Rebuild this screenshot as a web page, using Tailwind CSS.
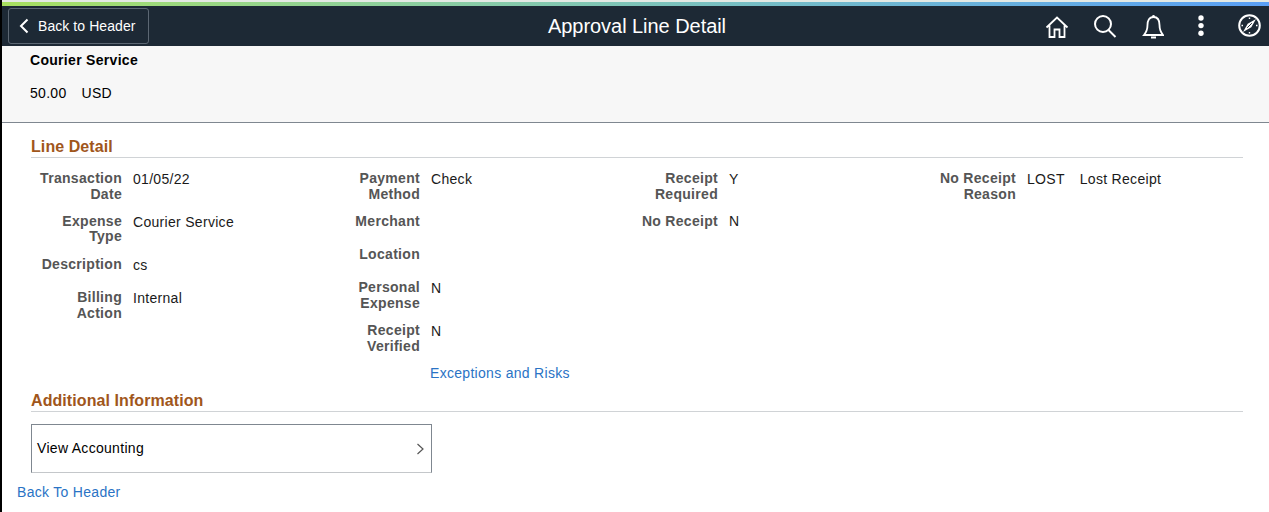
<!DOCTYPE html>
<html><head><meta charset="utf-8"><script src="https://cdn.jsdelivr.net/npm/@tailwindcss/browser@4"></script></head>
<body class="m-0 bg-white">
<div class="w-[1269px] h-[512px] overflow-hidden border-l-2 border-black font-['Liberation_Sans',Arial,sans-serif] text-sm tracking-[0.3px] text-[#1a1a1a] relative">
  <div class="h-[6px] border-t-2 border-[#e4e9e4] bg-linear-to-r from-[#a8e05f] to-[#5a9ff5]"></div>
  <header class="h-[40px] bg-[#1d2935] flex items-center relative tracking-normal">
    <button class="ml-[6px] w-[141px] h-[36px] border border-[#5c6773] rounded-[3px] flex items-center text-white text-sm pl-[10px] tracking-[0.07px]">
      <svg width="10" height="16" viewBox="0 0 10 16" fill="none" stroke="white" stroke-width="2" class="mr-[9px]"><path d="M8.5 1.5 L2 8 L8.5 14.5"/></svg>
      <span>Back to Header</span>
    </button>
    <h1 class="absolute left-[546px] top-[8px] text-white text-[20px] leading-[24px] font-normal tracking-[-0.05px]">Approval Line Detail</h1>
    <div class="ml-auto flex items-center">
      <svg class="absolute left-[1043px] top-[9px]" width="24" height="24" viewBox="0 0 24 24" fill="none" stroke="white" stroke-width="1.8"><path d="M1.5 12.5 L12 2.5 L22.5 12.5 M4.5 10.5 V22 H9.5 V14.5 H14.5 V22 H19.5 V10.5"/></svg>
      <svg class="absolute left-[1091px] top-[8px]" width="24" height="26" viewBox="0 0 24 26" fill="none" stroke="white" stroke-width="2"><circle cx="10" cy="10" r="8"/><path d="M15.5 16 L22.5 23"/></svg>
      <svg class="absolute left-[1140px] top-[8px]" width="22" height="26" viewBox="0 0 22 26" fill="none" stroke="white" stroke-width="1.8"><path d="M11.5 3 C7 3 5.5 7 5.5 11 C5.5 16 4.5 18 2 21 H21 C18.5 18 17.5 16 17.5 11 C17.5 7 16 3 11.5 3 Z"/><circle cx="11.5" cy="2.5" r="1.4" fill="white" stroke="none"/><path d="M9 23.5 H14" stroke-width="2"/></svg>
      <svg class="absolute left-[1194px] top-[9px]" width="10" height="24" viewBox="0 0 10 24" fill="white"><circle cx="5" cy="3" r="2.7"/><circle cx="5" cy="10.6" r="2.7"/><circle cx="5" cy="18.2" r="2.7"/></svg>
      <svg class="absolute left-[1236px] top-[8px]" width="23" height="23" viewBox="0 0 23 23" fill="none" stroke="white" stroke-width="2"><circle cx="11.5" cy="11.5" r="10.3"/><path d="M18 5 L13.3 13.3 L5 18 L9.7 9.7 Z" fill="white" stroke="none"/><path d="M13.8 9.2 L9.2 13.8" stroke="#1d2935" stroke-width="1"/><path d="M11.5 3.5 V5 M11.5 18 V19.5 M3.5 11.5 H5 M18 11.5 H19.5" stroke-width="1.4"/></svg>
    </div>
  </header>
  <section class="h-[77px] bg-[#f7f7f7] border-b border-[#7f8790] pl-[28px]">
    <div class="font-bold text-black leading-[16px] pt-[6px]">Courier Service</div>
    <div class="flex gap-[15px] mt-[17px] leading-[16px] text-black"><span>50.00</span><span>USD</span></div>
  </section>
  <main class="pl-[29px] w-[1241px]">
    <h2 class="mt-[15px] text-[#a0561b] font-bold text-base leading-[18px] border-b border-[#d0d3d6] pb-[1px] tracking-[0.08px]">Line Detail</h2>
    <div class="grid grid-cols-[298px_298px_298px_1fr] mt-[12px] leading-[16px]">
      <div class="flex flex-col">
        <div class="grid grid-cols-[91px_1fr] gap-x-[11px] h-[44px]"><b class="text-right text-[#555]">Transaction Date</b><span class="pt-[1px]">01/05/22</span></div>
        <div class="grid grid-cols-[91px_1fr] gap-x-[11px] h-[42px]"><b class="text-right text-[#555] leading-[15px]">Expense Type</b><span>Courier Service</span></div>
        <div class="grid grid-cols-[91px_1fr] gap-x-[11px] h-[33px]"><b class="text-right text-[#555]">Description</b><span class="pt-[1px]">cs</span></div>
        <div class="grid grid-cols-[91px_1fr] gap-x-[11px]"><b class="text-right text-[#555]">Billing Action</b><span class="pt-[1px]">Internal</span></div>
      </div>
      <div class="flex flex-col">
        <div class="grid grid-cols-[91px_1fr] gap-x-[11px] h-[43px]"><b class="text-right text-[#555]">Payment Method</b><span class="pt-[1px]">Check</span></div>
        <div class="grid grid-cols-[91px_1fr] gap-x-[11px] h-[33px]"><b class="text-right text-[#555]">Merchant</b></div>
        <div class="grid grid-cols-[91px_1fr] gap-x-[11px] h-[33px]"><b class="text-right text-[#555]">Location</b></div>
        <div class="grid grid-cols-[91px_1fr] gap-x-[11px] h-[43px]"><b class="text-right text-[#555]">Personal Expense</b><span class="pt-[1px]">N</span></div>
        <div class="grid grid-cols-[91px_1fr] gap-x-[11px] h-[43px]"><b class="text-right text-[#555]">Receipt Verified</b><span class="pt-[1px]">N</span></div>
        <a class="ml-[101px] text-[#2a73c5] leading-[16px]">Exceptions and Risks</a>
      </div>
      <div class="flex flex-col">
        <div class="grid grid-cols-[91px_1fr] gap-x-[11px] h-[43px]"><b class="text-right text-[#555]">Receipt Required</b><span class="pt-[1px]">Y</span></div>
        <div class="grid grid-cols-[91px_1fr] gap-x-[11px]"><b class="text-right text-[#555] whitespace-nowrap">No Receipt</b><span>N</span></div>
      </div>
      <div class="grid grid-cols-[91px_1fr] gap-x-[11px] self-start"><b class="text-right text-[#555]">No Receipt Reason</b><div class="flex gap-[15px] pt-[1px]"><span>LOST</span><span>Lost Receipt</span></div></div>
    </div>
    <h2 class="mt-[11px] text-[#a0561b] font-bold text-base leading-[18px] border-b border-[#d0d3d6] pb-[1px] tracking-[0.08px]">Additional Information</h2>
    <div class="mt-[12px] w-[401px] h-[49px] border border-[#7f8790] border-b-[#c4c7ca] flex items-center justify-between pl-[5px] pr-[6px] pb-[2px] text-black">
      <span>View Accounting</span>
      <svg width="9" height="14" viewBox="0 0 9 14" fill="none" stroke="#555" stroke-width="1.2" class="mt-[2px]"><path d="M1.5 2 L7 7 L1.5 12"/></svg>
    </div>
    <a class="block -ml-[14px] mt-[11px] text-[#2a73c5] leading-[16px]">Back To Header</a>
  </main>
</div>
</body></html>
